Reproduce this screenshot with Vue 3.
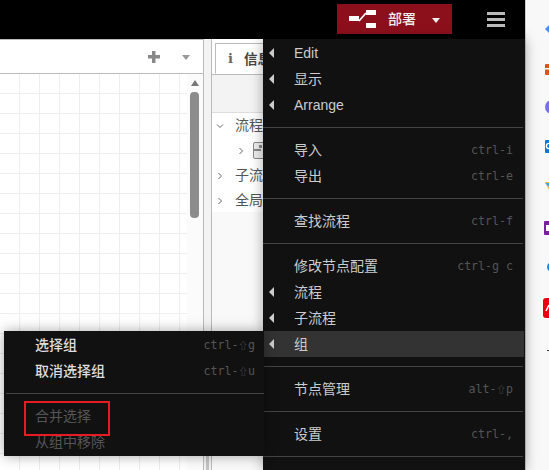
<template>
  <div class="page">
    <header class="topbar">
      <div class="deploy">
        <svg class="deploy-icon" width="28" height="19" viewBox="0 0 28 19">
          <rect x="0" y="6" width="10" height="5" fill="#fff" />
          <path d="M10 11 L17 3" stroke="#fff" stroke-width="1.6" fill="none" />
          <rect x="17" y="0" width="10" height="5" fill="#fff" />
          <rect x="17" y="13" width="10" height="5" fill="#fff" />
        </svg>
        <span class="deploy-label">部署</span>
        <span class="deploy-caret"></span>
      </div>
      <div class="burger"><i></i><i></i><i></i></div>
    </header>

    <div class="main">
      <div class="workspace">
        <div class="tabs">
          <span class="plus"></span>
          <span class="tabs-caret"></span>
        </div>
        <div class="canvas-wrap">
          <div class="grid"></div>
          <div class="scroll">
            <span class="scroll-up"></span>
            <span class="scroll-thumb"></span>
          </div>
        </div>
      </div>

      <div class="sep"><span class="grip"></span></div>

      <aside class="sidebar">
        <div class="side-tabs">
          <div class="side-tab">
            <span class="info">i</span>
            <b class="tab-title">信息</b>
          </div>
        </div>
        <div class="side-tools"></div>
        <div class="tree">
          <div class="tree-row">
            <svg class="chev" width="8" height="8" viewBox="0 0 8 8"><path d="M1 2.5 L4 5.5 L7 2.5" /></svg>
            <span class="tree-label">流程</span>
          </div>
          <div class="tree-row child">
            <svg class="chev" width="8" height="8" viewBox="0 0 8 8"><path d="M2.5 1 L5.5 4 L2.5 7" /></svg>
            <span class="node-icon"><i></i><em></em></span>
          </div>
          <div class="tree-row">
            <svg class="chev" width="8" height="8" viewBox="0 0 8 8"><path d="M2.5 1 L5.5 4 L2.5 7" /></svg>
            <span class="tree-label">子流程</span>
          </div>
          <div class="tree-row">
            <svg class="chev" width="8" height="8" viewBox="0 0 8 8"><path d="M2.5 1 L5.5 4 L2.5 7" /></svg>
            <span class="tree-label">全局配置节点</span>
          </div>
        </div>
      </aside>

      <div class="browser-strip">
        <svg width="24" height="352" viewBox="0 0 24 352">
          <path d="M20 29 L26 23 L32 29 L26 35 Z" fill="#4c8cf5" />
          <rect x="20" y="64" width="10" height="11" rx="1" fill="#d9541e" />
          <rect x="19" y="68" width="10" height="1.5" fill="#fff" />
          <circle cx="27" cy="107" r="7" fill="#7a6fe8" />
          <rect x="20" y="140" width="10" height="13" rx="1" fill="#0f78d4" />
          <circle cx="24" cy="146" r="2.6" fill="none" stroke="#fff" stroke-width="1.4" />
          <path d="M20 182 L30 182 L26 194 Z" fill="#f5b335" />
          <path d="M20 183 L24 183 L24 187 Z" fill="#3fa9f5" />
          <rect x="19" y="221" width="10" height="14" rx="1" fill="#7b1fa2" />
          <rect x="21" y="225" width="4" height="6" fill="#fff" />
          <circle cx="27" cy="267" r="5" fill="#1e88e5" />
          <rect x="18" y="298" width="12" height="20" rx="3" fill="#e60012" />
          <path d="M21 311 L24 305" stroke="#fff" stroke-width="1.5" />
          <rect x="22" y="350" width="3" height="1" fill="#333" />
        </svg>
      </div>
    </div>

    <div class="menu main-menu">
      <template v-for="(item, i) in mainMenu" :key="i">
        <div v-if="item.sep" class="menu-sep"></div>
        <div v-else class="menu-row" :class="{ active: item.active }">
          <span v-if="item.sub" class="menu-arrow"></span>
          <span class="menu-label" :class="{ cjk: !item.latin }">{{ item.label }}</span>
          <span v-if="item.key" class="menu-key">{{ keyParts(item.key)[0] }}<span v-if="keyParts(item.key).length > 1" class="shift">⇧</span>{{ keyParts(item.key)[1] }}</span>
        </div>
      </template>
    </div>

    <div class="menu sub-menu">
      <template v-for="(item, i) in groupMenu" :key="i">
        <div v-if="item.sep" class="menu-sep"></div>
        <div v-else class="menu-row" :class="{ disabled: item.disabled }">
          <span class="menu-label cjk">{{ item.label }}</span>
          <span v-if="item.key" class="menu-key">{{ keyParts(item.key)[0] }}<span class="shift">⇧</span>{{ keyParts(item.key)[1] }}</span>
        </div>
      </template>
    </div>

    <div class="mark"></div>
  </div>
</template>

<script setup>
const mainMenu = [
  { label: 'Edit', sub: true, latin: true },
  { label: '显示', sub: true },
  { label: 'Arrange', sub: true, latin: true },
  { sep: true },
  { label: '导入', key: 'ctrl-i' },
  { label: '导出', key: 'ctrl-e' },
  { sep: true },
  { label: '查找流程', key: 'ctrl-f' },
  { sep: true },
  { label: '修改节点配置', key: 'ctrl-g c' },
  { label: '流程', sub: true },
  { label: '子流程', sub: true },
  { label: '组', sub: true, active: true },
  { sep: true },
  { label: '节点管理', key: 'alt-⇧p' },
  { sep: true },
  { label: '设置', key: 'ctrl-,' },
  { sep: true },
]
const groupMenu = [
  { label: '选择组', key: 'ctrl-⇧g' },
  { label: '取消选择组', key: 'ctrl-⇧u' },
  { sep: true },
  { label: '合并选择', disabled: true },
  { label: '从组中移除', disabled: true },
]
const keyParts = (key) => key.split('⇧')
</script>

<style>
html, body { margin: 0; overflow: hidden; }
</style>

<style scoped>
.page { position: relative; width: 549px; height: 470px; overflow: hidden; background: #fff; font-family: "Liberation Sans", "Noto Sans CJK SC", sans-serif; font-size: 14px; color: #444; }

.topbar { height: 39px; background: #000; display: flex; justify-content: flex-end; align-items: flex-start; padding-right: 44px; gap: 35px; box-sizing: border-box; }
.deploy { margin-top: 4px; width: 115px; height: 30px; background: #8c101c; display: flex; align-items: center; padding-left: 12px; box-sizing: border-box; color: #eee; }
.deploy-icon { flex: none; }
.deploy-label { margin-left: 11px; width: 29px; white-space: nowrap; margin-top: -2px; font-weight: 500; }
.deploy-caret { margin-left: 15px; margin-top: 2px; border-left: 4.5px solid transparent; border-right: 4.5px solid transparent; border-top: 5px solid #eee; }
.burger { margin-top: 12px; width: 18px; display: flex; flex-direction: column; gap: 3px; }
.burger i { display: block; height: 3px; background: #bbb; }

.main { display: flex; height: 431px; }

.workspace { width: 203px; flex: none; border-right: 1px solid #bbb; }
.tabs { height: 35px; box-sizing: border-box; border-top: 1px solid #bbb; border-bottom: 1px solid #bbb; display: flex; justify-content: flex-end; align-items: center; padding-right: 13px; }
.plus { width: 12px; height: 12px; margin-right: 22px; margin-top: 1px; background: linear-gradient(#888, #888) center / 12px 3.5px no-repeat, linear-gradient(#888, #888) center / 3.5px 12px no-repeat; }
.tabs-caret { margin-top: 2px; border-left: 4.5px solid transparent; border-right: 4.5px solid transparent; border-top: 5px solid #999; }
.canvas-wrap { display: flex; height: 396px; }
.grid { width: 187px; flex: none; background-color: #fff;
  background-image: linear-gradient(to right, #eee 1px, transparent 1px), linear-gradient(to bottom, #eee 1px, transparent 1px);
  background-size: 20px 20px; background-position: 19px 19px; }
.scroll { flex: 1; background: #fbfbfb; display: flex; flex-direction: column; align-items: center; padding-top: 6px; padding-right: 1px; }
.scroll-up { flex: none; border-left: 4.5px solid transparent; border-right: 4.5px solid transparent; border-bottom: 6px solid #777; }
.scroll-thumb { flex: none; margin-top: 6px; width: 9px; height: 126px; border-radius: 4px; background: #8c8c8c; }

.sep { width: 7px; flex: none; background: #f3f3f3; border-right: 1px solid #bbb; position: relative; }
.grip { position: absolute; left: 2px; top: 415px; width: 3px; height: 16px; background: #c4c4c4; }

.sidebar { width: 314px; flex: none; display: flex; flex-direction: column; background: #f9f9f9; }
.side-tabs { height: 36px; padding-left: 3px; box-sizing: border-box; padding-top: 4px; background: #fff; border-bottom: 1px solid #bbb; }
.side-tab { height: 31px; box-sizing: border-box; border: 1px solid #bbb; border-bottom: 1px solid #fff; display: flex; align-items: center; padding-left: 12px; gap: 10px; background: #fff; color: #444; font-size: 13.5px; white-space: nowrap; }
.tab-title { margin-top: -2px; }
.info { font-family: "DejaVu Serif", serif; font-weight: bold; font-size: 13px; color: #666; width: 6px; }
.side-tools { height: 37px; background: #f3f3f3; border-bottom: 1px solid #ddd; }
.tree { background: #fff; padding-left: 4px; height: 99px; box-sizing: border-box; }
.tree-row { height: 25px; display: flex; align-items: center; color: #555; white-space: nowrap; }
.tree-label { margin-left: 11px; margin-top: -4px; }
.tree-row.child { padding-left: 21px; }
.chev { flex: none; fill: none; stroke: #666; stroke-width: 1; }
.node-icon { margin-left: 8px; flex: none; width: 18px; height: 17px; border: 1.5px solid #888; border-radius: 2px; box-sizing: border-box; background: #eee; position: relative; }
.node-icon i { position: absolute; left: 0; top: 6px; width: 7px; height: 1.5px; background: #888; }
.node-icon em { position: absolute; left: 5px; top: 2px; width: 3px; height: 3px; background: #888; }

.browser-strip { position: absolute; left: 525px; top: 0; width: 24px; height: 470px; background: #f8f8f8; border-left: 1px solid #ccc; box-sizing: border-box; overflow: hidden; }
.browser-strip svg { margin-left: -1px; }

.menu { position: absolute; background: #111; color: #ddd; box-sizing: border-box; box-shadow: 0 0 12px rgba(0, 0, 0, 0.35); }
.main-menu { left: 263px; top: 39px; width: 262px; height: 431px; padding-top: 1px; color: #ccc; }
.sub-menu { left: 4px; top: 331px; width: 260px; height: 125px; padding-top: 1px; }

.menu-row { height: 26px; display: flex; align-items: center; justify-content: space-between; position: relative; padding: 0 12px 0 31px; white-space: nowrap; }
.menu-row.active { background: #333; margin-right: 1px; padding-right: 11px; }
.menu-row.disabled { color: #555; }
.menu-label.cjk { margin-top: -2px; }
.sub-menu .menu-row:not(.disabled) .menu-label { font-weight: 500; }
.menu-arrow { position: absolute; left: 6px; top: 8px; border-top: 5px solid transparent; border-bottom: 5px solid transparent; border-right: 5px solid #ccc; }
.menu-key { font-family: "DejaVu Sans Mono", monospace; font-size: 11.6px; color: #555; }
.shift { font-family: "Noto Sans CJK SC", "DejaVu Sans", sans-serif; font-size: 9.5px; line-height: 1; }
.menu-sep { height: 1px; margin: 9px 2px 9px 0; background: #444; }
.sub-menu .menu-row { padding: 0 9px 0 31px; }
.sub-menu .menu-sep { margin: 9px 0 9px 2px; }

.mark { position: absolute; left: 24px; top: 401px; width: 86px; height: 35px; box-sizing: border-box; border: 2px solid #e51c23; pointer-events: none; }
</style>
